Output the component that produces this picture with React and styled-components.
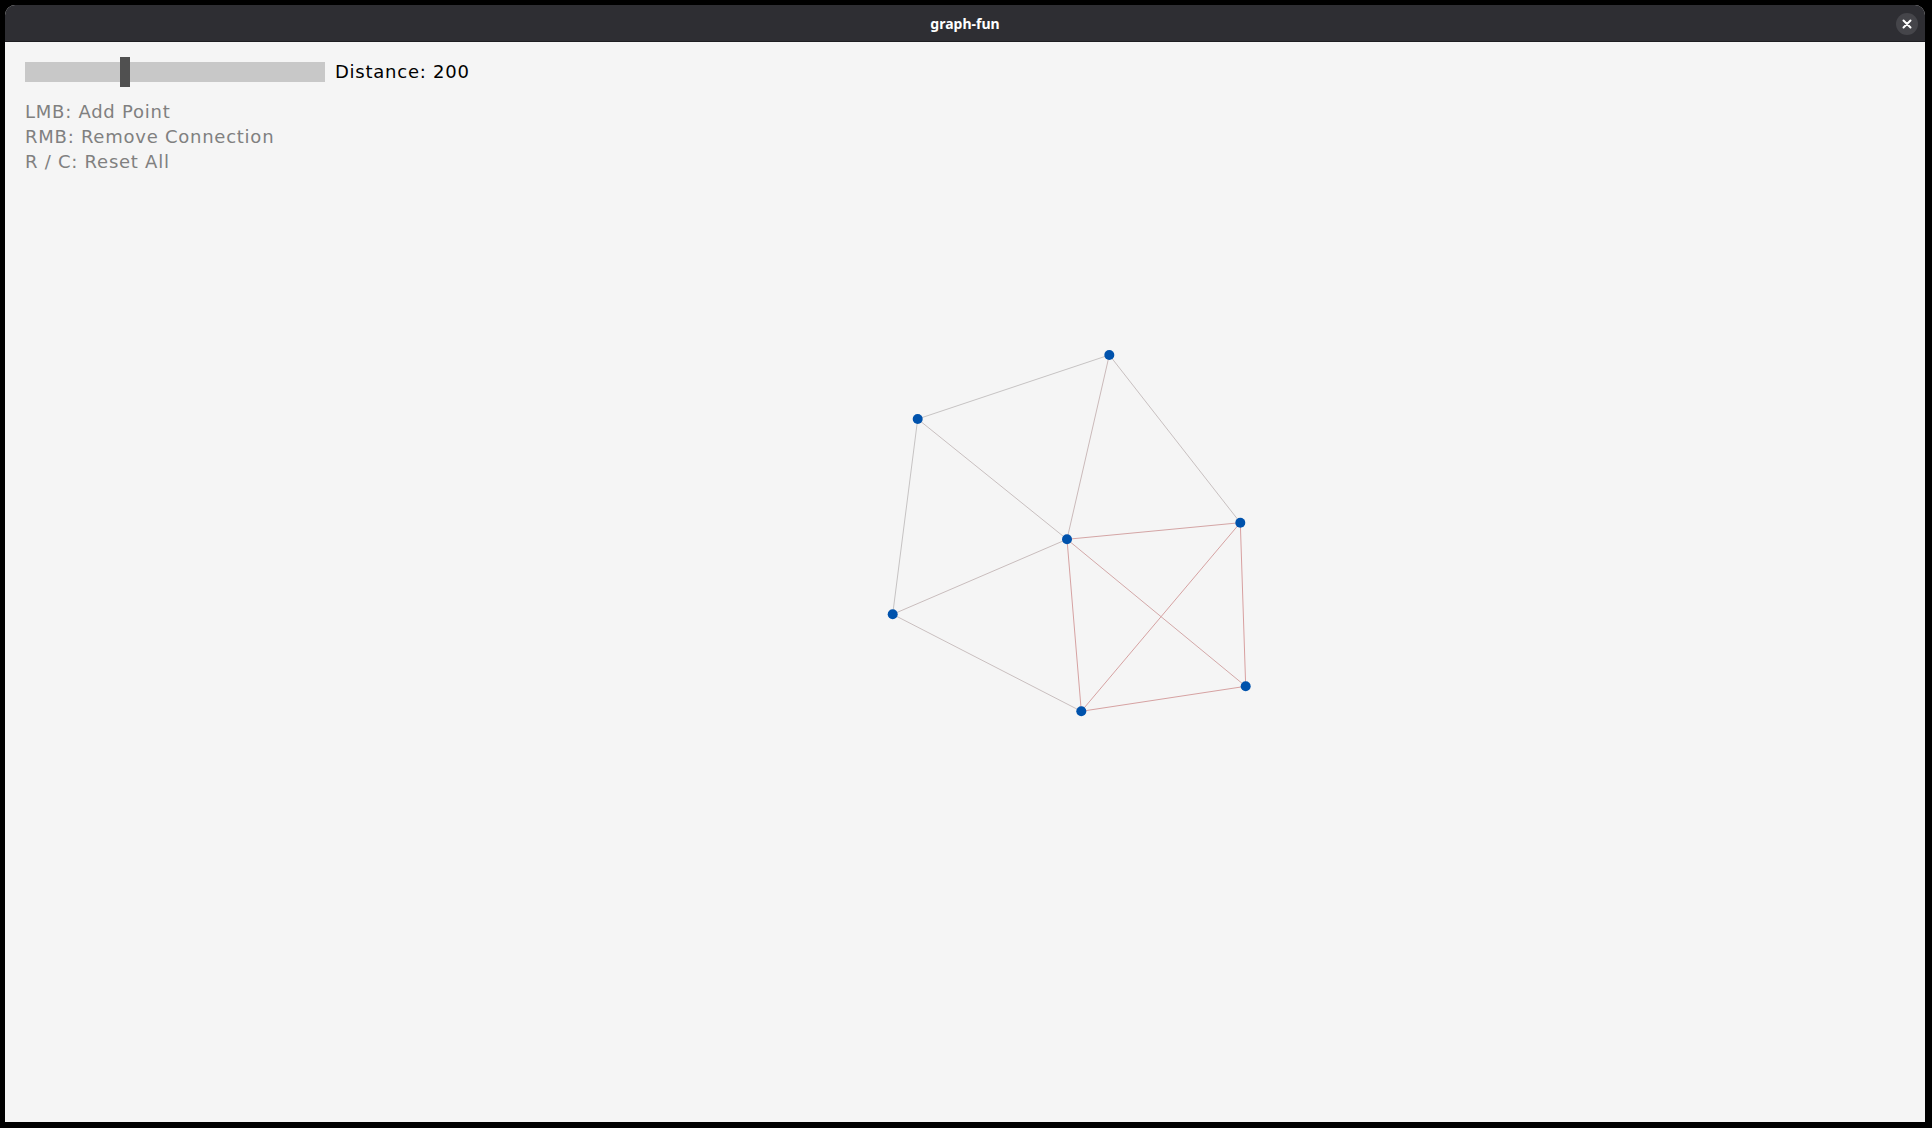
import React from 'react';
import styled, { createGlobalStyle } from 'styled-components';

const GlobalStyle = createGlobalStyle`
  html, body {
    margin: 0;
    padding: 0;
    background: #000;
  }
  body {
    padding: 5px 7px 6px 5px;
    font-family: "DejaVu Sans", sans-serif;
  }
`;

const Window = styled.div`
  width: 1920px;
  height: 1117px;
  display: flex;
  flex-direction: column;
  border-radius: 10px 10px 0 0;
  overflow: hidden;
  background: #f5f5f5;
`;

const TitleBar = styled.div`
  height: 37px;
  flex: none;
  background: #2e2e33;
  border-bottom: 1px solid #1e1e22;
  box-sizing: border-box;
  display: grid;
  grid-template-columns: 1fr auto 1fr;
  align-items: center;
  padding: 0 7px;
`;

const Title = styled.div`
  grid-column: 2;
  color: #fff;
  font-family: "Noto Sans", sans-serif;
  font-weight: 700;
  font-size: 14px;
`;

const CloseButton = styled.button`
  grid-column: 3;
  justify-self: end;
  width: 22px;
  height: 22px;
  border: none;
  border-radius: 50%;
  background: #45454a;
  padding: 0;
  display: flex;
  align-items: center;
  justify-content: center;
  margin-top: 1px;
`;

const Canvas = styled.div`
  position: relative;
  flex: 1;
  background: #f5f5f5;
`;

const Hud = styled.div`
  position: relative;
  z-index: 1;
  padding: 15px 0 0 20px;
  display: flex;
  flex-direction: column;
`;

const SliderRow = styled.div`
  display: flex;
  align-items: center;
  gap: 10px;
  height: 30px;
`;

const Track = styled.div`
  position: relative;
  width: 300px;
  height: 20px;
  background: #c8c8c8;
`;

const Thumb = styled.div`
  position: absolute;
  top: -5px;
  left: ${(p) => p.$pos}px;
  width: 10px;
  height: 30px;
  background: #505050;
`;

const Label = styled.span`
  font-size: 18px;
  letter-spacing: 0.75px;
  color: ${(p) => p.$color || '#000'};
  line-height: 25px;
`;

const Value = styled(Label)`
  margin-top: -2px;
`;

const Help = styled.div`
  display: flex;
  flex-direction: column;
  margin-top: 12px;
`;

const Board = styled.svg`
  position: absolute;
  inset: 0;
  width: 100%;
  height: 100%;
`;

const points = {
  a: [1104.3, 313],
  b: [912.7, 377],
  c: [1062, 497.3],
  d: [1235.3, 480.7],
  e: [887.7, 572.3],
  f: [1076.3, 669.3],
  g: [1240.7, 644.3],
};

const edges = [
  ['a', 'b', '#c6c3c3'],
  ['a', 'c', '#cbbaba'],
  ['a', 'd', '#c8c0c0'],
  ['b', 'c', '#c8bfbf'],
  ['b', 'e', '#c6c3c3'],
  ['c', 'e', '#c9bdbd'],
  ['e', 'f', '#c9bfbf'],
  ['c', 'd', '#d4a5a5'],
  ['c', 'f', '#d6a2a2'],
  ['c', 'g', '#d3a8a8'],
  ['d', 'f', '#d6a2a2'],
  ['d', 'g', '#d8a0a0'],
  ['f', 'g', '#d6a2a2'],
];

function Graph() {
  return (
    <Board>
      {edges.map(([from, to, color]) => (
        <line
          key={from + to}
          x1={points[from][0]}
          y1={points[from][1]}
          x2={points[to][0]}
          y2={points[to][1]}
          stroke={color}
          strokeWidth="1"
        />
      ))}
      {Object.entries(points).map(([id, [x, y]]) => (
        <circle key={id} cx={x} cy={y} r="5" fill="#0052ac" />
      ))}
    </Board>
  );
}

export default function App() {
  const distance = 200;

  return (
    <>
      <GlobalStyle />
      <Window>
        <TitleBar>
          <Title>graph-fun</Title>
          <CloseButton aria-label="Close">
            <svg width="10" height="10" viewBox="0 0 10 10">
              <path d="M1.5 1.5 L8.5 8.5 M8.5 1.5 L1.5 8.5" stroke="#fff" strokeWidth="2" strokeLinecap="round" />
            </svg>
          </CloseButton>
        </TitleBar>
        <Canvas>
          <Graph />
          <Hud>
            <SliderRow>
              <Track>
                <Thumb $pos={95} />
              </Track>
              <Value>Distance: {distance}</Value>
            </SliderRow>
            <Help>
              <Label $color="#808080">LMB: Add Point</Label>
              <Label $color="#808080">RMB: Remove Connection</Label>
              <Label $color="#808080">R / C: Reset All</Label>
            </Help>
          </Hud>
        </Canvas>
      </Window>
    </>
  );
}
